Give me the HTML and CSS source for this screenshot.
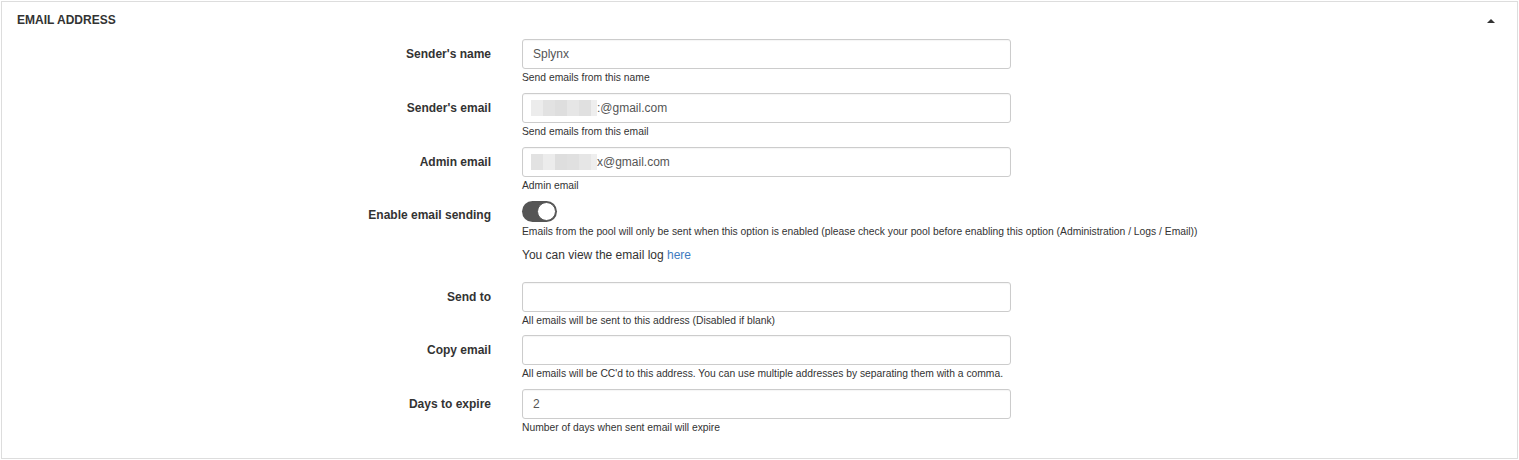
FILE: index.html
```html
<!DOCTYPE html>
<html>
<head>
<meta charset="utf-8">
<link rel="stylesheet" href="styles.css">
</head>
<body>
<div class="panel">
  <div class="panel-heading">
    <span class="panel-title">EMAIL ADDRESS</span>
    <span class="caret-up"></span>
  </div>
  <div class="panel-body">
    <div class="form-row">
      <label class="form-label">Sender's name</label>
      <div class="form-field">
        <div class="input">Splynx</div>
        <div class="help">Send emails from this name</div>
      </div>
    </div>
    <div class="form-row">
      <label class="form-label">Sender's email</label>
      <div class="form-field">
        <div class="input"><span class="blur"><i class="b1"></i><i class="b2"></i><i class="b3"></i><i class="b4"></i><i class="b5"></i><i class="b6"></i></span>:@gmail.com</div>
        <div class="help">Send emails from this email</div>
      </div>
    </div>
    <div class="form-row">
      <label class="form-label">Admin email</label>
      <div class="form-field">
        <div class="input"><span class="blur"><i class="b2"></i><i class="b1"></i><i class="b3"></i><i class="b5"></i><i class="b4"></i><i class="b6"></i></span>x@gmail.com</div>
        <div class="help">Admin email</div>
      </div>
    </div>
    <div class="form-row toggle-row">
      <label class="form-label">Enable email sending</label>
      <div class="form-field">
        <div class="switch"><span class="knob"></span></div>
        <div class="help help-toggle">Emails from the pool will only be sent when this option is enabled (please check your pool before enabling this option (Administration / Logs / Email))</div>
        <p class="note">You can view the email log <a href="#">here</a></p>
      </div>
    </div>
    <div class="form-row tight">
      <label class="form-label">Send to</label>
      <div class="form-field">
        <div class="input"></div>
        <div class="help">All emails will be sent to this address (Disabled if blank)</div>
      </div>
    </div>
    <div class="form-row">
      <label class="form-label">Copy email</label>
      <div class="form-field">
        <div class="input"></div>
        <div class="help">All emails will be CC'd to this address. You can use multiple addresses by separating them with a comma.</div>
      </div>
    </div>
    <div class="form-row">
      <label class="form-label">Days to expire</label>
      <div class="form-field">
        <div class="input">2</div>
        <div class="help">Number of days when sent email will expire</div>
      </div>
    </div>
  </div>
</div>
</body>
</html>
```
FILE: styles.css
```css
* { box-sizing: border-box; }
html, body { margin: 0; padding: 0; background: #fff; }
body {
  padding: 1px;
  font-family: "Liberation Sans", Arial, sans-serif;
  color: #333;
}
.panel {
  border: 1px solid #ddd;
  width: 1517px;
  height: 458px;
  background: #fff;
}
.panel-heading {
  display: flex;
  justify-content: space-between;
  align-items: center;
  height: 36px;
  padding: 0 22px 0 15px;
}
.panel-title {
  font-size: 12px;
  font-weight: bold;
  color: #333;
  line-height: 15px;
}
.caret-up {
  width: 0; height: 0;
  border-left: 4px solid transparent;
  border-right: 4px solid transparent;
  border-bottom: 4px solid #333;
  margin-top: 2px;
}
.panel-body {
  padding-top: 1px;
}
.form-row {
  display: grid;
  grid-template-columns: 489px 1fr;
  column-gap: 31px;
  margin-bottom: 8px;
}
.form-row.tight { margin-bottom: 7px; }
.form-label {
  text-align: right;
  font-size: 12px;
  font-weight: bold;
  line-height: 15px;
  padding-top: 8px;
  color: #333;
}
.toggle-row .form-label { padding-top: 7px; }
.input {
  width: 489px;
  height: 30px;
  border: 1px solid #ccc;
  border-radius: 3px;
  padding: 0 10px;
  font-size: 12px;
  line-height: 28px;
  color: #555;
  display: flex;
  align-items: center;
  box-shadow: inset 0 1px 1px rgba(0,0,0,.04);
}
.help {
  font-size: 10.3px;
  line-height: 15px;
  margin-top: 1px;
  color: #333;
  white-space: nowrap;
}
.help-toggle { margin-top: 2px; }
.switch {
  width: 35px;
  height: 21px;
  border-radius: 11px;
  background: #555;
  display: flex;
  justify-content: flex-end;
  align-items: center;
  padding: 1px;
}
.knob {
  width: 19px;
  height: 19px;
  border-radius: 50%;
  background: #fff;
  border: 1px solid #555;
}
.note {
  margin: 7px 0 10px;
  font-size: 12px;
  line-height: 18px;
  color: #333;
}
.note a { color: #3f7bbf; text-decoration: none; }
.blur {
  display: inline-flex;
  height: 16px;
  margin-left: -2px;
}
.blur i { display: block; height: 16px; }
.blur .b1 { width: 12px; background: #ececec; }
.blur .b2 { width: 12px; background: #e2e2e2; }
.blur .b3 { width: 12px; background: #dedede; }
.blur .b4 { width: 12px; background: #e6e6e6; }
.blur .b5 { width: 12px; background: #e0e0e0; }
.blur .b6 { width: 6px; background: #eeeeee; }
```
